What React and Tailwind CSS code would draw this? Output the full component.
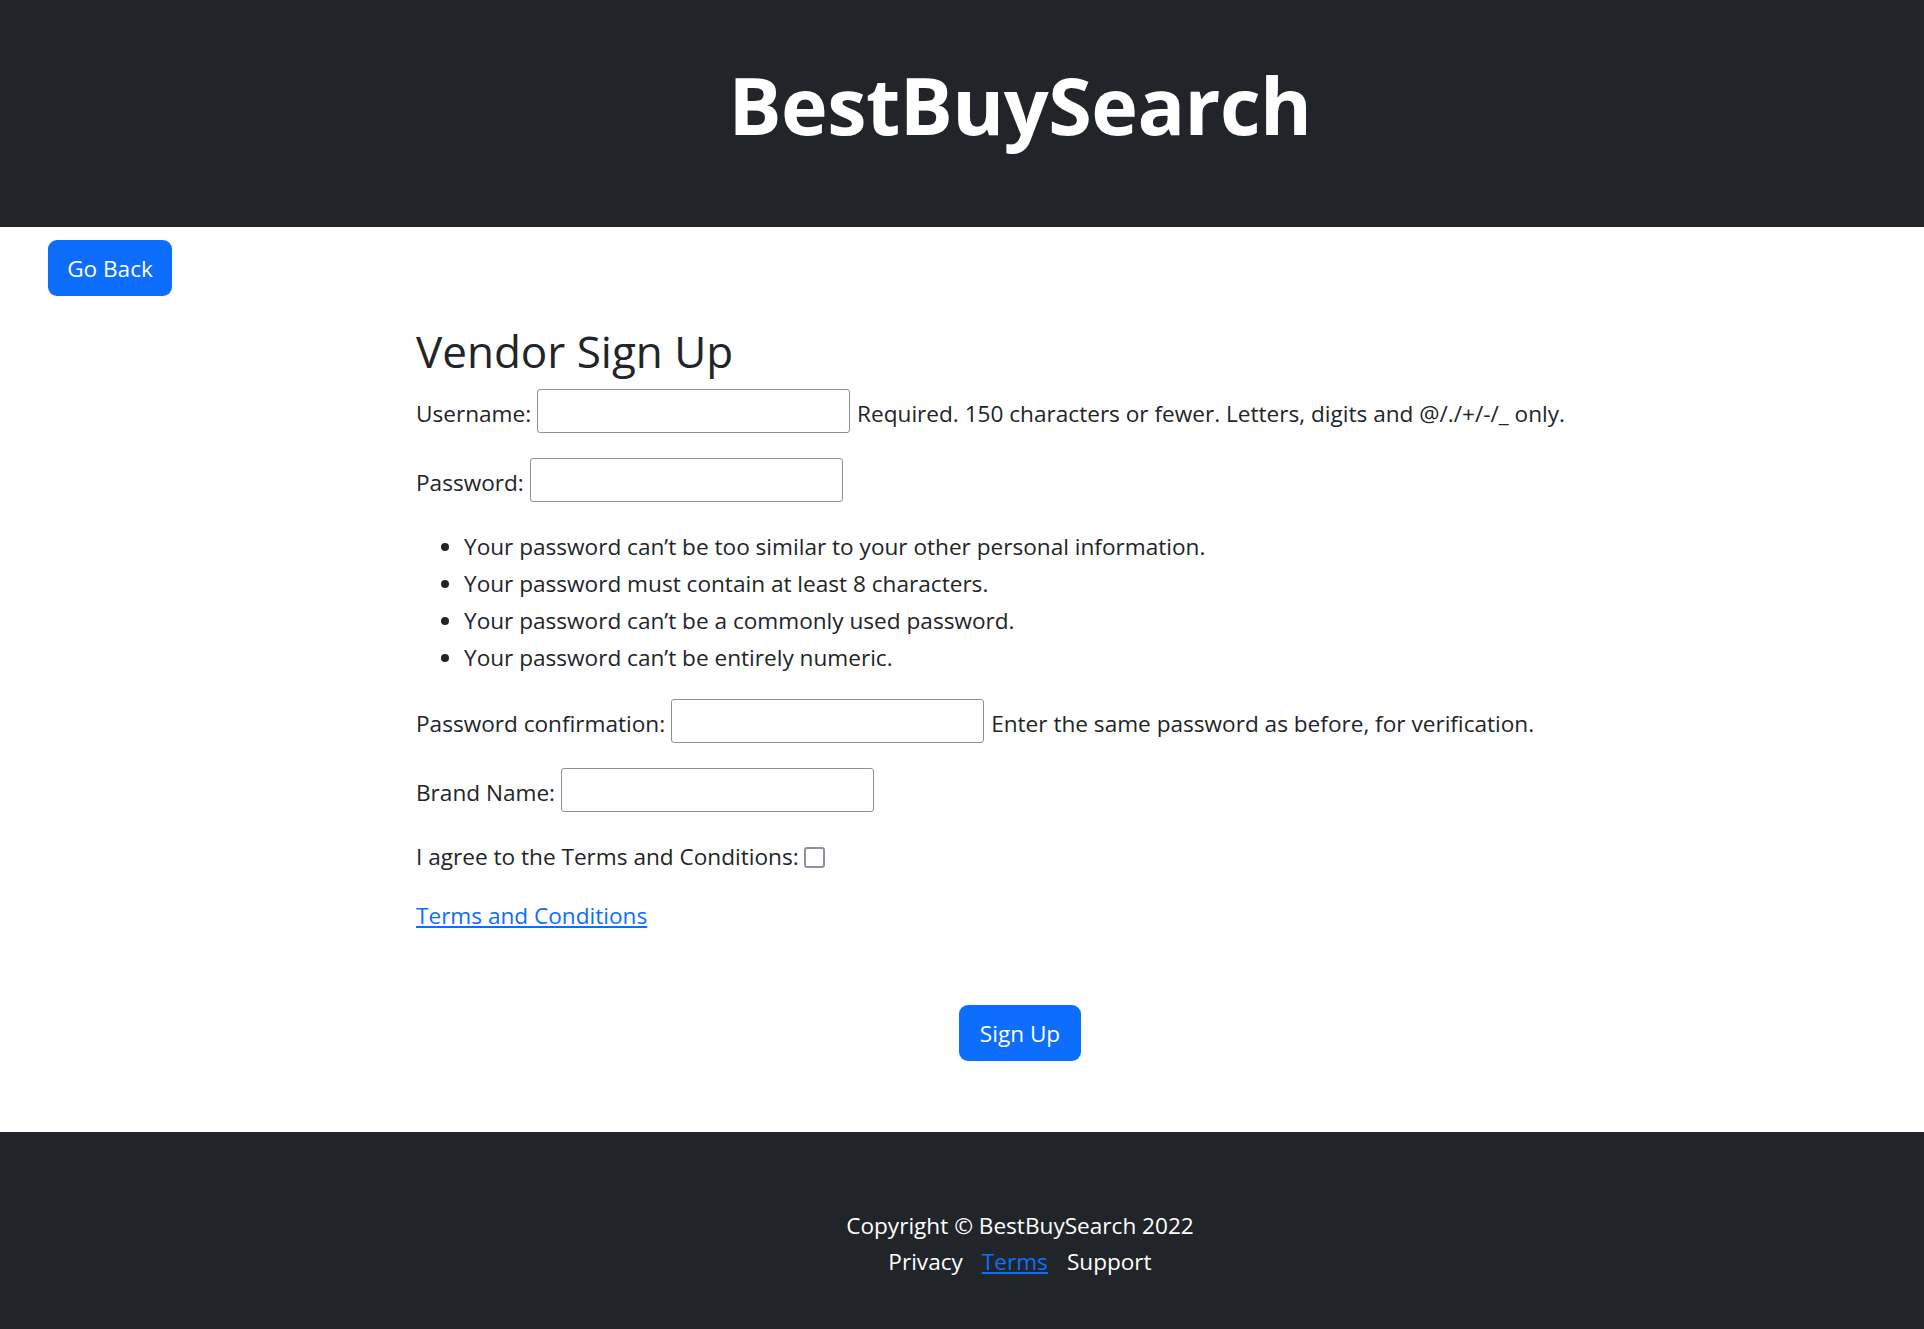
import { useState } from 'react'

const RULES = [
  'Your password can’t be too similar to your other personal information.',
  'Your password must contain at least 8 characters.',
  'Your password can’t be a commonly used password.',
  'Your password can’t be entirely numeric.',
]

function Field({ label, type = 'text', help, className = '' }) {
  return (
    <div className={`flex h-[44px] items-center gap-[6px] ${className}`}>
      <label className="pt-[5px] leading-[36px]">{label}</label>
      <input
        type={type}
        className="h-[44px] w-[313px] rounded-[3px] border-[1.5px] border-[#8f8f9d] bg-white px-2 outline-none"
      />
      {help && <span className="ml-[1px] pt-[5px] leading-[36px]">{help}</span>}
    </div>
  )
}

export default function App() {
  const [agree, setAgree] = useState(false)

  return (
    <div className="min-h-screen bg-white font-['Open_Sans',sans-serif] text-[22.6px] text-[#212529]">
      {/* Header */}
      <header className="h-[227px] bg-[#212529] pt-[65px]">
        <div className="ml-[416px] w-[1208px] text-center">
          <h1 className="text-[79px] leading-none font-bold tracking-[-0.5px] text-white">BestBuySearch</h1>
        </div>
      </header>

      <button className="ml-[48px] mt-[13px] flex h-[56px] w-[124px] items-center justify-center rounded-[9px] bg-[#0d6efd] pt-[2px] text-white">
        Go Back
      </button>

      {/* Form */}
      <main className="ml-[416px] flex w-[1208px] flex-col">
        <h2 className="mt-[26px] h-[58px] text-[44px] leading-[58px]">Vendor Sign Up</h2>

        <Field
          className="mt-[9px]"
          label="Username:"
          help="Required. 150 characters or fewer. Letters, digits and @/./+/-/_ only."
        />
        <Field className="mt-[25px]" label="Password:" type="password" />

        <ul className="mt-[26px] list-disc pl-[48px]">
          {RULES.map((r) => (
            <li key={r} className="leading-[37px]">{r}</li>
          ))}
        </ul>

        <Field
          className="mt-[23px]"
          label="Password confirmation:"
          type="password"
          help="Enter the same password as before, for verification."
        />
        <Field className="mt-[25px]" label="Brand Name:" />

        <div className="mt-[27px] flex h-[36px] items-center gap-[5px]">
          <span className="leading-[36px]">I agree to the Terms and Conditions:</span>
          <button
            onClick={() => setAgree(!agree)}
            className="h-[21px] w-[21px] rounded-[3px] border-2 border-[#8f8f9d] bg-white text-[14px] leading-none"
          >
            {agree ? '✓' : ''}
          </button>
        </div>

        <div className="mt-[23px] h-[36px] leading-[36px]">
          <a href="#" className="text-[#0d6efd] underline">Terms and Conditions</a>
        </div>

        <div className="mt-[71px] flex justify-center">
          <button className="flex h-[56px] w-[122px] items-center justify-center rounded-[9px] bg-[#0d6efd] pt-[2px] text-white">
            Sign Up
          </button>
        </div>
      </main>

      {/* Footer */}
      <footer className="mt-[71px] h-[197px] bg-[#212529] pt-[76px] text-white">
        <div className="ml-[416px] w-[1208px] text-center leading-[36px]">
          <p>Copyright © BestBuySearch 2022</p>
          <div className="flex justify-center gap-[19px]">
            <a href="#">Privacy</a>
            <a href="#" className="text-[#0d6efd] underline">Terms</a>
            <a href="#">Support</a>
          </div>
        </div>
      </footer>
    </div>
  )
}
